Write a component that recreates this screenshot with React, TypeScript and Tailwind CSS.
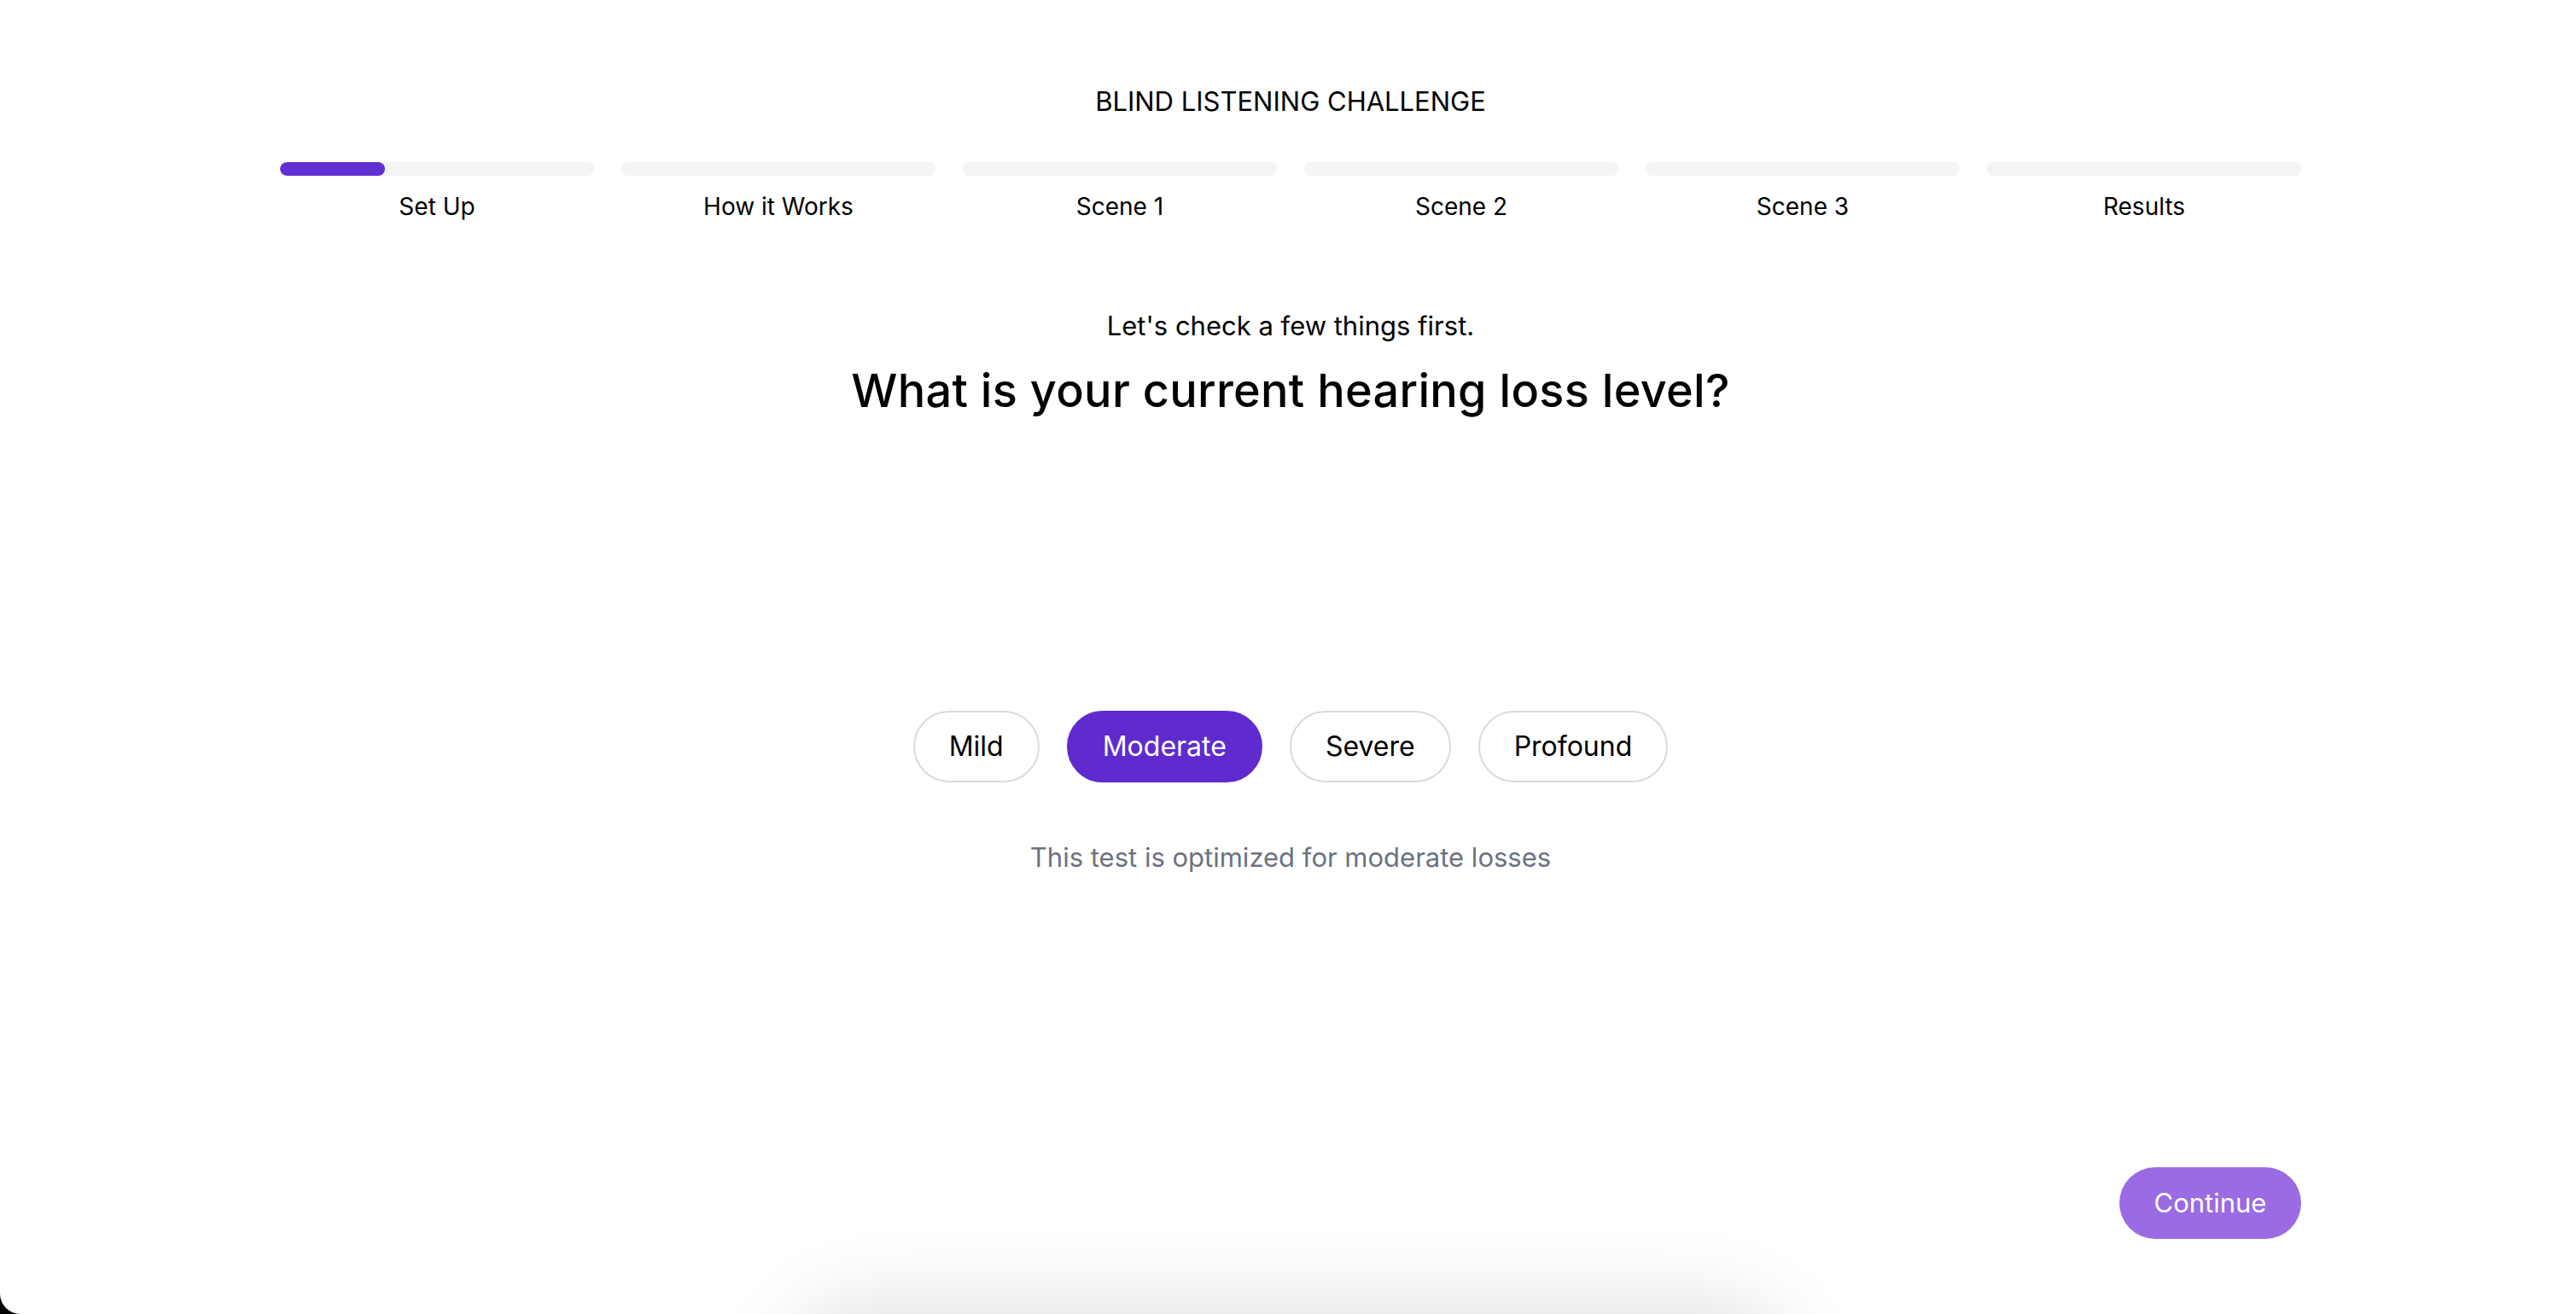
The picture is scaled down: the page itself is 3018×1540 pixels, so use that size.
const STEPS = ['Set Up', 'How it Works', 'Scene 1', 'Scene 2', 'Scene 3', 'Results'];
const LEVELS = ['Mild', 'Moderate', 'Severe', 'Profound'];

export default function App() {
  const selected = 'Moderate';

  return (
    <div
      className="relative w-full h-[1540px] overflow-hidden bg-white text-black pl-[6px]"
      style={{ fontFamily: 'Inter, "Noto Sans", sans-serif' }}
    >
      <div className="w-[2368px] mx-auto pt-[99px] flex flex-col">
        {/* Title */}
        <h1 className="text-center text-[31px] leading-[40px] font-normal">BLIND LISTENING CHALLENGE</h1>

        {/* Steps */}
        <div className="mt-[51px] grid grid-cols-6 gap-[32px]">
          {STEPS.map((step, i) => (
            <div key={step} className="flex flex-col items-center">
              <div className="w-full h-[16px] rounded-full bg-[#f3f4f6] overflow-hidden">
                {i === 0 && <div className="w-[123px] h-full rounded-full bg-[#6130d2]" />}
              </div>
              <span className="mt-[18px] text-[28px] leading-[36px]">{step}</span>
            </div>
          ))}
        </div>

        {/* Question */}
        <p className="mt-[102px] text-center text-[31px] leading-[40px]">Let's check a few things first.</p>
        <h2 className="mt-[26px] text-center text-[54px] leading-[60px] font-medium tracking-[0.3px]">
          What is your current hearing loss level?
        </h2>

        {/* Options */}
        <div className="mt-[345px] flex justify-center gap-[32px]">
          {LEVELS.map((level) => (
            <button
              key={level}
              type="button"
              className={`h-[84px] px-[40px] rounded-full text-[32px] ${
                level === selected
                  ? 'bg-[#5f2bcf] text-white border-2 border-[#5f2bcf]'
                  : 'bg-white text-black border-2 border-[#dadada]'
              }`}
            >
              {level}
            </button>
          ))}
        </div>
        <p className="mt-[68px] text-center text-[31px] leading-[40px] text-[#6b7280]">
          This test is optimized for moderate losses
        </p>

        {/* Continue */}
        <div className="mt-[343px] flex justify-end">
          <button
            type="button"
            className="h-[84px] w-[213px] rounded-full bg-[#9a6be2] text-white text-[31px]"
          >
            Continue
          </button>
        </div>
      </div>

      {/* shadow of element below the fold */}
      <div className="absolute left-[960px] top-[1570px] w-[1100px] h-[200px] rounded-[60px] bg-white shadow-[0_0_90px_50px_rgba(0,0,0,0.11)]" />

      {/* screen corner */}
      <div className="absolute left-0 bottom-0 w-[24px] h-[24px] bg-black">
        <div className="w-full h-full bg-white rounded-bl-[24px]" />
      </div>
    </div>
  );
}
